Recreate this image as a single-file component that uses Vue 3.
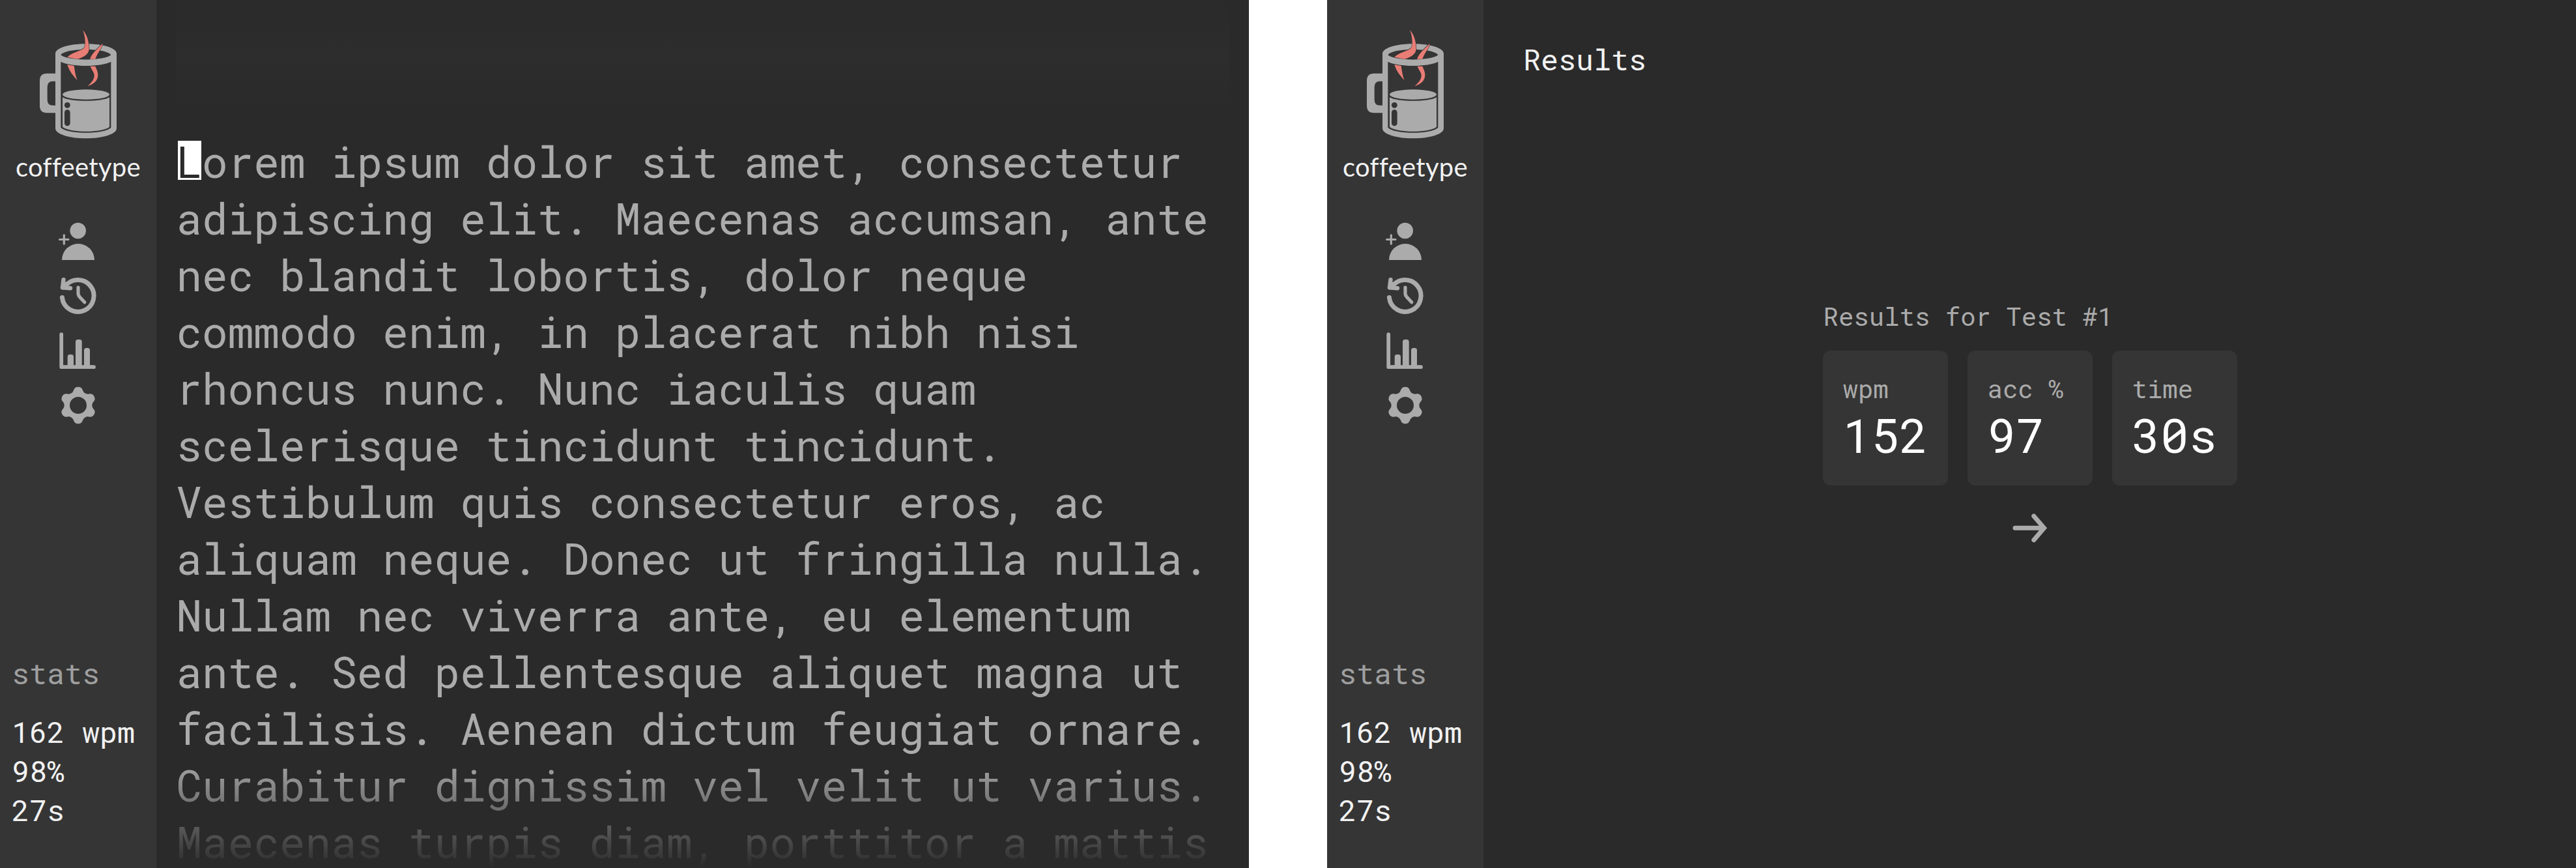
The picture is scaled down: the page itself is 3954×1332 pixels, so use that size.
<script setup>
const lines = [
  'orem ipsum dolor sit amet, consectetur',
  'adipiscing elit. Maecenas accumsan, ante',
  'nec blandit lobortis, dolor neque',
  'commodo enim, in placerat nibh nisi',
  'rhoncus nunc. Nunc iaculis quam',
  'scelerisque tincidunt tincidunt.',
  'Vestibulum quis consectetur eros, ac',
  'aliquam neque. Donec ut fringilla nulla.',
  'Nullam nec viverra ante, eu elementum',
  'ante. Sed pellentesque aliquet magna ut',
  'facilisis. Aenean dictum feugiat ornare.',
  'Curabitur dignissim vel velit ut varius.',
  'Maecenas turpis diam, porttitor a mattis',
]
const results = [
  { label: 'wpm', value: '152' },
  { label: 'acc %', value: '97' },
  { label: 'time', value: '30s' },
]
const screens = ['typing', 'results']

// Six-lobed cog: alternating convex lobes and concave valleys
function cogPath(cx, cy) {
  const at = (deg) => {
    const a = (deg * Math.PI) / 180
    return `${(cx + 24.03 * Math.cos(a)).toFixed(2)} ${(cy + 24.03 * Math.sin(a)).toFixed(2)}`
  }
  let d = `M${at(13)}`
  for (let k = 0; k < 6; k++) {
    d += `A7.33 7.33 0 0 1 ${at(k * 60 + 47)}A8 8 0 0 0 ${at(k * 60 + 73)}`
  }
  return d + `ZM${cx - 13} ${cy}a13 13 0 1 0 26 0a13 13 0 1 0 -26 0Z`
}
const cog = cogPath(30, 30)
</script>

<template>
  <div class="board">
    <section v-for="screen in screens" :key="screen" class="screen">
      <aside class="sidebar">
        <svg class="mug" viewBox="180 130 360 516">
          <path fill="#ababab" fill-rule="evenodd" d="M255 339H216Q183 339 183 372V488Q183 521 216 521H255ZM255 375H243Q218 375 218 403V459Q218 486 243 486H255Z" />
          <path fill="#ababab" fill-rule="evenodd" d="M255 248C255 222 318 203 396 203S537 222 537 248V592C537 618 474 638 396 638S255 618 255 592ZM280 254C300 221 491 221 511 254C491 285 300 285 280 254ZM280 285V588C310 620 481 620 511 588V285C465 310 326 310 280 285Z" />
          <ellipse cx="396" cy="436" rx="108" ry="23" fill="#ababab" />
          <path fill="#ababab" d="M288 449C320 471 472 471 504 449V585C472 613 320 613 288 585Z" />
          <circle cx="310" cy="485" r="13.3" fill="#353535" />
          <rect x="297" y="506" width="26" height="75" rx="13" fill="#353535" />
          <g fill="#e87d75" stroke="#353535" stroke-width="4" paint-order="stroke">
            <path d="M381 140C400 159 410 190 410 228C408 250 388 263 357 273Q333 268 310 264C334 240 367 239 387 222C396 212 393 166 381 140Z" />
            <path d="M473 201C467 229 450 240 439 273H414C426 242 449 225 473 201Z" />
            <path d="M310 299L341 304C345 330 347 347 356 370C336 350 319 328 310 299Z" />
            <path d="M416 306H439C444 319 452 330 451 350C449 375 430 389 403 398C421 383 435 365 434 347C433 332 420 320 416 306Z" />
          </g>
          <path fill="none" stroke="#ababab" stroke-width="26" d="M270 263C315 297 476 297 521 263" />
        </svg>
        <div class="brand">coffeetype</div>
        <nav class="nav">
          <svg viewBox="0 0 60 60">
            <circle cx="29.7" cy="14" r="12.3" />
            <path d="M5 59a25 25 0 0 1 50 0Z" />
            <path class="line" stroke-width="3.2" d="M1.6 27.5H15M8.3 20.8V34.2" />
          </svg>
          <svg viewBox="0 0 60 60">
            <path class="line" stroke-width="7" d="M5.4 32.6A24.4 24.4 0 1 0 9.5 16.2" />
            <path class="line" stroke-width="6.4" d="M7.5 5.2L6 17.3L18 18.3M6 17.3L12 12" />
            <path class="line" stroke-width="5.2" d="M30 17V26Q30 29.500 32.500 32L39.800 39.800" />
          </svg>
          <svg viewBox="0 0 60 60">
            <path class="line" stroke-width="5.7" d="M4.200 5.200V55.200H54" />
            <path d="M13.700 55V39.500a3.500 3.500 0 0 1 3.500-3.500h2.300a3.500 3.500 0 0 1 3.500 3.500V55ZM26 55V16.500a3.500 3.500 0 0 1 3.500-3.500h2.700a3.500 3.500 0 0 1 3.500 3.500V55ZM39 55V29.500a3.500 3.500 0 0 1 3.500-3.500h2a3.500 3.500 0 0 1 3.500 3.500V55Z" />
          </svg>
          <svg viewBox="0 0 60 60"><path fill-rule="evenodd" :d="cog" /></svg>
        </nav>
        <div class="stats">
          <h2>stats</h2>
          <p>162 wpm</p>
          <p>98%</p>
          <p>27s</p>
        </div>
      </aside>

      <main v-if="screen === 'typing'" class="typing">
        <div class="veil top"></div>
        <p v-for="(line, i) in lines" :key="i"><span v-if="i === 0" class="caret">L</span>{{ line }}</p>
        <div class="veil bottom"></div>
      </main>

      <main v-else class="results">
        <h1>Results</h1>
        <div class="summary">
          <h3>Results for Test #1</h3>
          <div class="cards">
            <div v-for="r in results" :key="r.label" class="card">
              <span class="label">{{ r.label }}</span>
              <span class="value">{{ r.value }}</span>
            </div>
          </div>
          <svg class="next" viewBox="0 0 54 46">
            <path fill="none" stroke="#ababab" stroke-width="7" stroke-linecap="round" d="M4 23.300H46M32.800 4.900L48.500 23.300L32.800 41.700" />
          </svg>
        </div>
      </main>
    </section>
  </div>
</template>

<style>
body {
  background: #fff;
}
</style>

<style scoped>
.board {
  display: flex;
  gap: 120px;
  width: 3954px;
  height: 1332px;
  overflow: hidden;
  font-family: 'Roboto Mono', 'DejaVu Sans Mono', monospace;
  color: #ababab;
}
h1, h2, h3, p {
  margin: 0;
  font-weight: 400;
}
.screen {
  display: flex;
  width: 1917px;
  height: 1332px;
  background: #2a2a2a;
}
.sidebar {
  display: flex;
  flex-direction: column;
  width: 240px;
  box-sizing: border-box;
  padding: 43px 0 59px;
  background: #353535;
  flex: none;
}
.mug {
  width: 120px;
  height: 172px;
  margin-left: 60px;
  flex: none;
}
.brand {
  margin-top: 14px;
  height: 54px;
  line-height: 54px;
  text-align: center;
  font-family: Lato, sans-serif;
  font-size: 40px;
  letter-spacing: 0.3px;
  font-variant-ligatures: none;
  color: #f2f2f2;
  white-space: nowrap;
}
.nav {
  display: flex;
  flex-direction: column;
  gap: 24px;
  margin: 57px 0 0 90px;
}
.nav svg {
  width: 60px;
  height: 60px;
  fill: #ababab;
  overflow: visible;
}
.nav .line {
  fill: none;
  stroke: #ababab;
  stroke-linecap: round;
  stroke-linejoin: round;
}
.stats {
  margin-top: auto;
  padding-left: 18px;
  font-size: 45px;
  line-height: 60px;
  color: #f2f2f2;
  white-space: pre;
}
.stats h2 {
  margin-bottom: 30px;
  font-size: 45px;
  color: #9f9f9f;
}
.typing {
  position: relative;
  flex: 1;
  padding: 204px 0 0 30.5px;
  overflow: hidden;
}
.typing p {
  height: 87px;
  line-height: 87px;
  font-size: 66px;
  white-space: pre;
}
.caret {
  color: #2a2a2a;
  background: linear-gradient(#fff, #fff) 2.5px 12px / 36px 60px no-repeat;
}
.veil {
  position: absolute;
  left: 30px;
  width: 1617px;
}
.veil.top {
  top: 0;
  height: 168px;
  background: linear-gradient(#2a2a2a, #2d2d2d 50%, #2a2a2a);
}
.veil.bottom {
  top: 1160px;
  height: 172px;
  background: linear-gradient(rgba(42, 42, 42, 0), #2a2a2a);
}
.results {
  display: flex;
  flex-direction: column;
  flex: 1;
}
.results h1 {
  margin: 61px 0 0 61px;
  font-size: 45px;
  line-height: 60px;
  color: #f2f2f2;
}
.summary {
  align-self: center;
  width: 636px;
  margin-top: 338px;
}
.summary h3 {
  height: 79px;
  padding-left: 1px;
  font-size: 39px;
  line-height: 52px;
}
.cards {
  display: flex;
  gap: 30px;
}
.card {
  display: flex;
  flex-direction: column;
  width: 192px;
  height: 207px;
  box-sizing: border-box;
  padding: 32px 0 0 31px;
  border-radius: 12px;
  background: #353535;
  white-space: pre;
}
.label {
  font-size: 39px;
  line-height: 52px;
}
.value {
  font-size: 72.5px;
  line-height: 96px;
  margin-top: -3px;
  color: #fff;
}
.next {
  display: block;
  width: 54px;
  height: 46px;
  margin: 42px auto 0;
}
</style>
